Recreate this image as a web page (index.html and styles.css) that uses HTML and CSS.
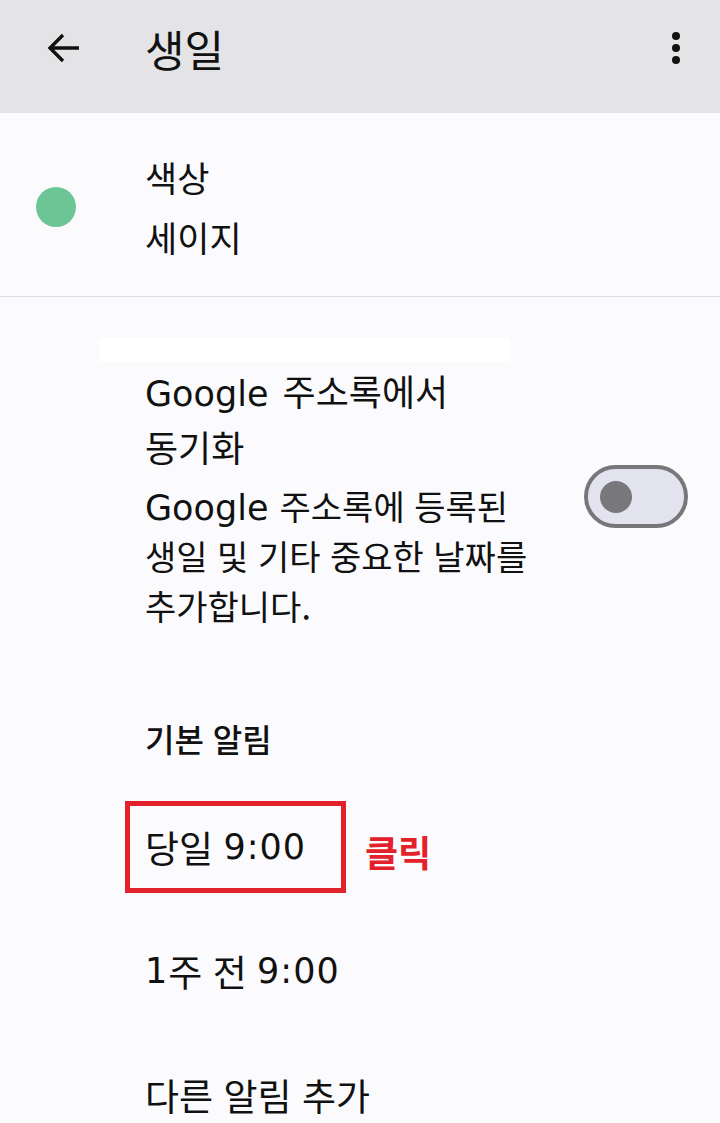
FILE: index.html
```html
<!DOCTYPE html>
<html lang="ko">
<head>
<meta charset="utf-8">
<title>생일</title>
<link rel="stylesheet" href="styles.css">
</head>
<body>
<header class="appbar">
  <div class="appbar-lead">
    <svg class="icon-back" viewBox="0 0 34 32" width="34" height="32" aria-hidden="true">
      <path d="M32 16H4M16 3L3 16l13 13" fill="none" stroke="#111" stroke-width="3.4" stroke-linecap="butt" stroke-linejoin="miter"/>
    </svg>
  </div>
  <h1 class="appbar-title">생일</h1>
  <div class="appbar-more" aria-label="더보기">
    <span class="dot"></span><span class="dot"></span><span class="dot"></span>
  </div>
</header>

<section class="color-row">
  <div class="color-lead"><span class="swatch"></span></div>
  <div class="color-text">
    <div class="line">색상</div>
    <div class="line">세이지</div>
  </div>
</section>

<section class="sync">
  <div class="blank-strip"></div>
  <div class="sync-row">
    <div class="sync-text">
      <div class="sync-title"><span class="latin title-latin">Google </span>주소록에서<br>동기화</div>
      <div class="sync-desc"><span class="latin">Google </span>주소록에 등록된<br>생일 및 기타 중요한 날짜를<br>추가합니다.</div>
    </div>
    <div class="toggle"><span class="knob"></span></div>
  </div>
</section>

<section class="alerts">
  <h2 class="alerts-head">기본 알림</h2>
  <div class="alert-item highlight-row">
    <div class="highlight-box">당일 <span class="num">9:00</span></div>
    <span class="click-note">클릭</span>
  </div>
  <div class="alert-item"><span class="num">1</span>주 전 <span class="num">9:00</span></div>
  <div class="alert-item">다른 알림 추가</div>
</section>
</body>
</html>
```

FILE: styles.css
```css
html, body {
  margin: 0;
  padding: 0;
}
body {
  background: #fbfbfe;
  color: #111;
  font-family: "Noto Sans CJK KR", "Noto Sans", sans-serif;
  width: 720px;
  overflow: hidden;
}

.appbar {
  display: flex;
  align-items: center;
  height: 96px;
  padding-bottom: 17px;
  background: #e4e4e7;
}
.appbar-lead {
  width: 145px;
  display: flex;
  align-items: center;
  padding-left: 47px;
  box-sizing: border-box;
}
.icon-back { display: block; }
.appbar-title {
  flex: 1;
  margin: 0;
  font-size: 43px;
  font-weight: 400;
  line-height: 56px;
}
.appbar-more {
  display: flex;
  flex-direction: column;
  align-items: center;
  gap: 4px;
  width: 10px;
  margin-right: 39px;
}
.dot {
  width: 8px;
  height: 8px;
  border-radius: 50%;
  background: #111;
}

.color-row {
  display: flex;
  align-items: center;
  padding: 34px 0 29px;
  border-bottom: 1px solid #dcdce0;
}
.color-lead {
  width: 145px;
  padding-left: 36px;
  box-sizing: border-box;
}
.swatch {
  display: block;
  width: 40px;
  height: 40px;
  border-radius: 50%;
  background: #6cc595;
}
.color-text .line {
  font-size: 35px;
  line-height: 60px;
}

.sync {
  padding-top: 41px;
}
.blank-strip {
  margin-left: 100px;
  width: 410px;
  height: 24px;
  background: #ffffff;
}
.sync-row {
  display: flex;
  align-items: center;
  padding-left: 145px;
  padding-right: 32px;
}
.sync-text {
  flex: 1;
  white-space: nowrap;
}
.sync-title {
  font-size: 36px;
  line-height: 56px;
}
.sync-desc {
  margin-top: 7px;
  font-size: 34px;
  line-height: 50px;
}
.latin {
  font-family: "DejaVu Sans", "Noto Sans", sans-serif;
  font-size: 35px;
  line-height: 1;
  white-space: pre;
}
.title-latin {
  margin-right: 3px;
}
.toggle {
  width: 104px;
  height: 63px;
  flex: none;
  box-sizing: border-box;
  border: 4px solid #77777b;
  border-radius: 32px;
  background: #e3e3ef;
  display: flex;
  align-items: center;
  padding-left: 12px;
}
.knob {
  width: 32px;
  height: 32px;
  border-radius: 50%;
  background: #78787c;
}

.alerts {
  padding-top: 82px;
  padding-left: 145px;
}
.alerts-head {
  margin: 0 0 38px;
  font-size: 32px;
  font-weight: 500;
  line-height: 50px;
}
.alert-item {
  height: 92px;
  display: flex;
  align-items: center;
  font-size: 37px;
  line-height: 50px;
  margin-bottom: 32px;
  white-space: pre;
}
.num {
  font-family: "DejaVu Sans", "Noto Sans", sans-serif;
  font-size: 35px;
  line-height: 1;
  letter-spacing: 1px;
}
.highlight-row {
  margin-left: -20px;
}
.highlight-box {
  width: 221px;
  height: 92px;
  box-sizing: border-box;
  border: 5px solid #e3212b;
  padding-left: 15px;
  display: flex;
  align-items: center;
  white-space: pre;
}
.click-note {
  margin-left: 19px;
  color: #e3212b;
  font-size: 36px;
  font-weight: 700;
  padding-top: 8px;
}
```
